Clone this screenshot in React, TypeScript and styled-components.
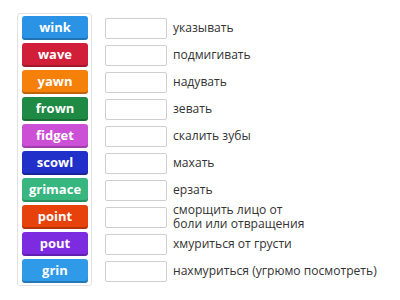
import { type FC } from 'react'
import styled, { createGlobalStyle } from 'styled-components'

const GlobalStyle = createGlobalStyle`
  body {
    margin: 0;
    background: #fff;
    font-family: 'Open Sans', 'DejaVu Sans', sans-serif;
  }
`

type Pair = { word: string; color: string; meaning: string[] }

const pairs: Pair[] = [
  { word: 'wink', color: '#2a93e6', meaning: ['указывать'] },
  { word: 'wave', color: '#d11f3a', meaning: ['подмигивать'] },
  { word: 'yawn', color: '#f5800a', meaning: ['надувать'] },
  { word: 'frown', color: '#1f8a43', meaning: ['зевать'] },
  { word: 'fidget', color: '#cc50d6', meaning: ['скалить зубы'] },
  { word: 'scowl', color: '#2030c8', meaning: ['махать'] },
  { word: 'grimace', color: '#37b67f', meaning: ['ерзать'] },
  { word: 'point', color: '#e8420c', meaning: ['сморщить лицо от', 'боли или отвращения'] },
  { word: 'pout', color: '#7d2be0', meaning: ['хмуриться от грусти'] },
  { word: 'grin', color: '#2f9ae8', meaning: ['нахмуриться (угрюмо посмотреть)'] },
]

const Board = styled.div`
  display: flex;
  align-items: flex-start;
  gap: 13px;
  padding: 13px 0 0 17px;
`

const TilePanel = styled.div`
  display: flex;
  flex-direction: column;
  gap: 3px;
  padding: 2px 3px 2px 4px;
  border: 1px solid #e2e2e2;
  border-radius: 3px;
`

const Tile = styled.div<{ $color: string }>`
  width: 66px;
  height: 24px;
  box-sizing: border-box;
  display: flex;
  align-items: center;
  justify-content: center;
  background: ${({ $color }) => $color};
  border-radius: 3px;
  box-shadow: inset 0 -2px 0 rgba(0, 0, 0, 0.22);
  color: #fff;
  font-size: 13px;
  font-weight: 700;
  padding-bottom: 2px;
`

const Targets = styled.div`
  display: flex;
  flex-direction: column;
  gap: 3px;
  padding-top: 3px;
`

const Row = styled.div`
  display: flex;
  align-items: center;
  gap: 6px;
  height: 24px;
`

const DropBox = styled.div`
  width: 62px;
  height: 21px;
  box-sizing: border-box;
  border: 1px solid #cfcfcf;
  border-radius: 2px;
  flex-shrink: 0;
`

const Meaning = styled.div`
  display: flex;
  flex-direction: column;
  font-size: 12.1px;
  line-height: 14px;
  color: #333;
  white-space: nowrap;
`

const App: FC = () => (
  <>
    <GlobalStyle />
    <Board>
      <TilePanel>
        {pairs.map(({ word, color }) => (
          <Tile key={word} $color={color}>
            {word}
          </Tile>
        ))}
      </TilePanel>
      <Targets>
        {pairs.map(({ word, meaning }) => (
          <Row key={word}>
            <DropBox />
            <Meaning>
              {meaning.map((line) => (
                <span key={line}>{line}</span>
              ))}
            </Meaning>
          </Row>
        ))}
      </Targets>
    </Board>
  </>
)

export default App
